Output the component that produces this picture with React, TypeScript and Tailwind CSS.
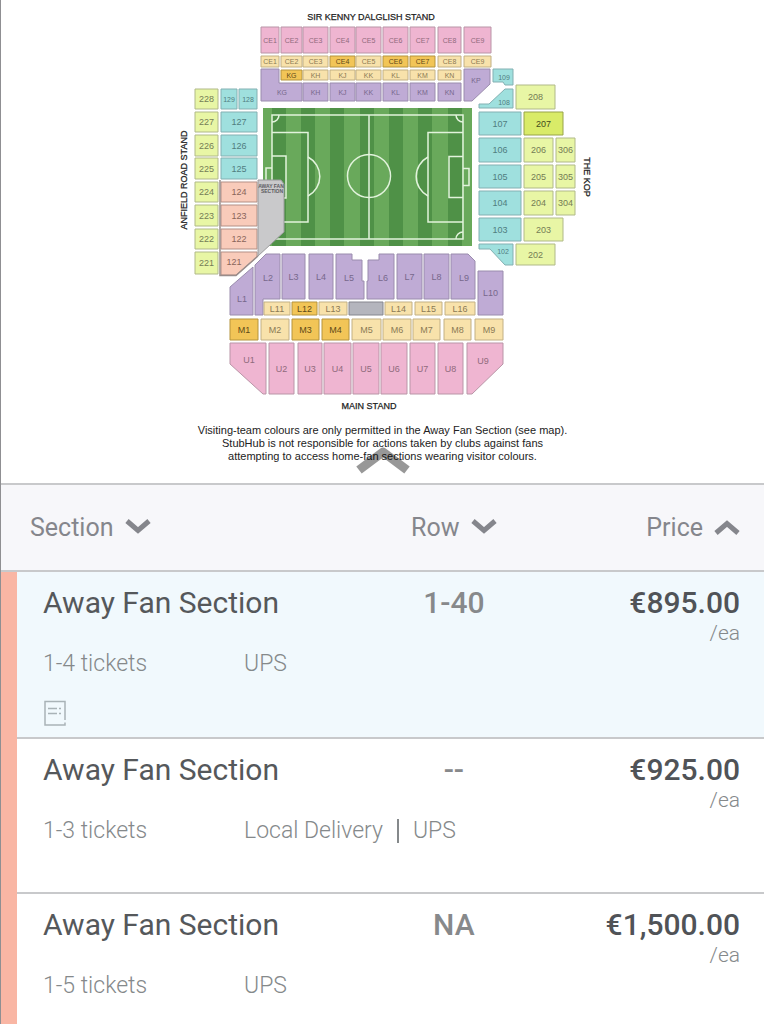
import { useState } from "react";

type Tone = "pink" | "cream" | "gold" | "purple" | "teal" | "lime" | "limeOn" | "peach" | "grey";

interface Block {
  label: string;
  tone: Tone;
  // corner list of the block, "x,y x,y ..."
  points: string;
  x: number;
  y: number;
  size?: number;
}

interface Listing {
  id: number;
  section: string;
  row: string;
  price: string;
  tickets: string;
  delivery: string[];
  hasNote: boolean;
}

const TONES: Record<Tone, { shape: string; text: string }> = {
  pink: { shape: "fill-[#efb5d1] stroke-[#b995a7]", text: "fill-[#8f6a7c]" },
  cream: { shape: "fill-[#f8e2ab] stroke-[#c2b084]", text: "fill-[#8b7a55]" },
  gold: { shape: "fill-[#f2c557] stroke-[#b5943f]", text: "fill-[#5f4a17]" },
  purple: { shape: "fill-[#bfabd5] stroke-[#9a8cad]", text: "fill-[#77688c]" },
  teal: { shape: "fill-[#9fe0de] stroke-[#83b0b2]", text: "fill-[#4f7d80]" },
  lime: { shape: "fill-[#e8f6a5] stroke-[#b0b988]", text: "fill-[#747c55]" },
  limeOn: { shape: "fill-[#d9eb68] stroke-[#97a348]", text: "fill-[#3f4a1c]" },
  peach: { shape: "fill-[#f9cbba] stroke-[#b38f85]", text: "fill-[#8a655b]" },
  grey: { shape: "fill-[#b4b5bd] stroke-[#85868e]", text: "fill-[#555555]" },
};

function box(label: string, tone: Tone, x1: number, y1: number, x2: number, y2: number, size = 9): Block {
  return {
    label,
    tone,
    points: `${x1},${y1} ${x2},${y1} ${x2},${y2} ${x1},${y2}`,
    x: (x1 + x2) / 2,
    y: (y1 + y2) / 2,
    size,
  };
}

const TOP_COLS = [
  [261, 279],
  [281, 302],
  [303, 328],
  [330, 355],
  [356, 381],
  [383, 408],
  [410, 435],
  [438, 461],
  [464, 491],
];
const TOP_K = ["KG", "KH", "KJ", "KK", "KL", "KM", "KN"];

const DALGLISH: Block[] = [
  ...TOP_COLS.map(([a, b], i) => box(`CE${i + 1}`, "pink", a, 27, b, 53, 7)),
  ...TOP_COLS.map(([a, b], i) => box(`CE${i + 1}`, [3, 5, 6].includes(i) ? "gold" : "cream", a, 56, b, 67, 7)),
  ...TOP_K.map((k, i) => box(k, i === 0 ? "gold" : "cream", TOP_COLS[i + 1][0], 70, TOP_COLS[i + 1][1], 80, 7)),
  { label: "KG", tone: "purple", points: "261,69 279,69 279,83 302,83 302,101 261,101", x: 282, y: 92, size: 7 },
  ...TOP_K.slice(1).map((k, i) => box(k, "purple", TOP_COLS[i + 2][0], 83, TOP_COLS[i + 2][1], 101, 7)),
  { label: "KP", tone: "purple", points: "464,69 490,69 490,84 472,101 464,101", x: 476, y: 80, size: 7 },
];

const KOP: Block[] = [
  { label: "109", tone: "teal", points: "493,69 513,69 513,85 505,85 503,82 493,82", x: 504, y: 77, size: 7 },
  { label: "108", tone: "teal", points: "505,89 513,89 513,108 479,108 479,104 489,104", x: 504, y: 102, size: 7 },
  box("208", "lime", 516, 85, 555, 109),
  box("107", "teal", 479, 112, 521, 135),
  box("207", "limeOn", 524, 112, 563, 135),
  box("106", "teal", 479, 138, 521, 162),
  box("206", "lime", 524, 138, 553, 162),
  box("306", "lime", 556, 138, 575, 162),
  box("105", "teal", 479, 165, 521, 188),
  box("205", "lime", 524, 165, 553, 188),
  box("305", "lime", 556, 165, 575, 188),
  box("104", "teal", 479, 191, 521, 215),
  box("204", "lime", 524, 191, 553, 215),
  box("304", "lime", 556, 191, 575, 215),
  box("103", "teal", 479, 218, 521, 241),
  box("203", "lime", 524, 218, 563, 241),
  { label: "102", tone: "teal", points: "479,244 513,244 513,265 505,265 490,249 479,249", x: 503, y: 251, size: 7 },
  box("202", "lime", 516, 244, 555, 265),
];

const ANFIELD_ROAD: Block[] = [
  box("228", "lime", 195, 89, 218, 109),
  box("129", "teal", 221, 89, 237, 109, 7),
  box("128", "teal", 239, 89, 257, 109, 7),
  box("227", "lime", 195, 112, 218, 132),
  box("127", "teal", 221, 112, 257, 132),
  box("226", "lime", 195, 135, 218, 156),
  box("126", "teal", 221, 135, 257, 156),
  box("225", "lime", 195, 158, 218, 179),
  box("125", "teal", 221, 158, 257, 179),
  box("224", "lime", 195, 182, 218, 202),
  box("124", "peach", 221, 182, 257, 202),
  box("223", "lime", 195, 205, 218, 226),
  box("123", "peach", 221, 205, 257, 226),
  box("222", "lime", 195, 229, 218, 249),
  box("122", "peach", 221, 229, 257, 249),
  box("221", "lime", 195, 252, 218, 274),
  { label: "121", tone: "peach", points: "221,252 257,252 257,257 236,275 221,275", x: 234, y: 262 },
];

const MAIN: Block[] = [
  { label: "L1", tone: "purple", points: "230,287 253,267 253,315 230,315", x: 242, y: 299 },
  { label: "L2", tone: "purple", points: "255,265 266,254 280,254 280,299 263,299 263,315 255,315", x: 268, y: 278 },
  box("L3", "purple", 282, 254, 305, 299),
  box("L4", "purple", 309, 254, 333, 299),
  {
    label: "L5",
    tone: "purple",
    points: "336,254 352,254 352,260 362,260 362,281 364,281 364,299 336,299",
    x: 349,
    y: 278,
  },
  {
    label: "L6",
    tone: "purple",
    points: "368,260 379,260 379,254 394,254 394,299 367,299 367,281 368,281",
    x: 383,
    y: 278,
  },
  box("L7", "purple", 397, 254, 422, 299),
  box("L8", "purple", 424, 254, 449, 299),
  { label: "L9", tone: "purple", points: "451,254 468,254 475,261 475,299 451,299", x: 464, y: 278 },
  box("L10", "purple", 478, 271, 503, 315),
  box("L11", "cream", 264, 302, 290, 315),
  box("L12", "gold", 292, 302, 317, 315),
  box("L13", "cream", 319, 302, 347, 315),
  box("", "grey", 349, 302, 383, 315),
  box("L14", "cream", 385, 302, 412, 315),
  box("L15", "cream", 415, 302, 442, 315),
  box("L16", "cream", 445, 302, 475, 315),
  box("M1", "gold", 230, 319, 258, 340),
  box("M2", "cream", 261, 319, 289, 340),
  box("M3", "gold", 292, 319, 319, 340),
  box("M4", "gold", 322, 319, 349, 340),
  box("M5", "cream", 352, 319, 381, 340),
  box("M6", "cream", 383, 319, 411, 340),
  box("M7", "cream", 413, 319, 440, 340),
  box("M8", "cream", 444, 319, 471, 340),
  box("M9", "cream", 475, 319, 503, 340),
  { label: "U1", tone: "pink", points: "230,343 266,343 266,394 263,394 230,364", x: 249, y: 360 },
  box("U2", "pink", 269, 343, 294, 394),
  box("U3", "pink", 298, 343, 322, 394),
  box("U4", "pink", 324, 343, 351, 394),
  box("U5", "pink", 353, 343, 379, 394),
  box("U6", "pink", 381, 343, 407, 394),
  box("U7", "pink", 410, 343, 435, 394),
  box("U8", "pink", 438, 343, 463, 394),
  { label: "U9", tone: "pink", points: "467,343 503,343 503,364 472,394 467,394", x: 483, y: 361 },
];

const BLOCKS = [...DALGLISH, ...KOP, ...ANFIELD_ROAD, ...MAIN];

const GRASS_BANDS = [272, 301, 330, 360, 389, 418, 448];

const LISTINGS: Listing[] = [
  {
    id: 1,
    section: "Away Fan Section",
    row: "1-40",
    price: "€895.00",
    tickets: "1-4 tickets",
    delivery: ["UPS"],
    hasNote: true,
  },
  {
    id: 2,
    section: "Away Fan Section",
    row: "--",
    price: "€925.00",
    tickets: "1-3 tickets",
    delivery: ["Local Delivery", "UPS"],
    hasNote: false,
  },
  {
    id: 3,
    section: "Away Fan Section",
    row: "NA",
    price: "€1,500.00",
    tickets: "1-5 tickets",
    delivery: ["UPS"],
    hasNote: false,
  },
];

function Pitch() {
  return (
    <g>
      <rect x="263" y="108" width="209" height="138" className="fill-[#69a95b]" />
      {GRASS_BANDS.map((x) => (
        <rect key={x} x={x} y="108" width="14" height="138" className="fill-[#4f9147]" />
      ))}
      <g className="fill-none stroke-[#e2f3dc]" strokeWidth="1.5">
        <rect x="272" y="115" width="191" height="124" />
        <path d="M369 115V239" />
        <circle cx="369" cy="176" r="21.5" />
        <path d="M272 132.500H308V222H272M272 156H286V198H272M272 168H266V185H272" />
        <path d="M463 132.500H428V222H463M463 156.500H449V197.500H463M463 168.500H469V185.500H463" />
        <path d="M308 157A22 22 0 0 1 308 196M428 157A22 22 0 0 0 428 196" />
        <path d="M279 115A7 7 0 0 1 272 122M456 115A7 7 0 0 0 463 122M456 239A7 7 0 0 1 463 232" />
      </g>
    </g>
  );
}

function StadiumMap() {
  return (
    <svg
      viewBox="172 0 421 416"
      className="block w-[421px] max-w-full font-['Liberation_Sans',Arial,sans-serif]"
      role="img"
      aria-label="Stadium seating map"
      textAnchor="middle"
    >
      <Pitch />
      {BLOCKS.map((b, i) => (
        <g key={i}>
          <polygon points={b.points} className={TONES[b.tone].shape} strokeWidth="1" />
          <text x={b.x} y={b.y + (b.size === 7 ? 2.5 : 3)} fontSize={b.size ?? 9} className={TONES[b.tone].text}>
            {b.label}
          </text>
        </g>
      ))}
      <polygon
        points="258,180 281,180 284,184 284,232 258,256"
        className="fill-[#c9c9cb] stroke-[#9a9a9c]"
        strokeWidth="1"
      />
      <path d="M220 180V275.500H236L258 256" className="fill-none stroke-[#998d8b]" strokeWidth="1.5" />
      <g fontSize="5" fontWeight="bold" className="fill-[#5c5c62]">
        <text x="271" y="188">AWAY FAN</text>
        <text x="272" y="193">SECTION</text>
      </g>
      <g fontSize="9" className="fill-[#222222] stroke-[#222222]" strokeWidth="0.25">
        <text x="371" y="20">SIR KENNY DALGLISH STAND</text>
        <text x="369" y="409">MAIN STAND</text>
        <text transform="translate(187 180) rotate(-90)">ANFIELD ROAD STAND</text>
        <text transform="translate(584 177) rotate(90)">THE KOP</text>
      </g>
    </svg>
  );
}

function SortArrow({ up }: { up?: boolean }) {
  return (
    <svg viewBox="0 0 26 18" className="h-[18px] w-[26px] fill-none stroke-current" strokeWidth="5" aria-hidden="true">
      <path d={up ? "M2 14L13 4.500L24 14" : "M2 2L13 11.500L24 2"} />
    </svg>
  );
}

function NoteIcon() {
  return (
    <svg viewBox="0 0 24 26" className="h-[26px] w-6 fill-none stroke-[#a9b3b7]" strokeWidth="1.5" aria-hidden="true">
      <path d="M22 20V1.500H2V25H22V22.500" />
      <path d="M5 8.500H14M16 8.500H18M5 13.500H14M16 13.500H18" />
    </svg>
  );
}

function ListingRows({ listing, first }: { listing: Listing; first: boolean }) {
  const line = first ? "" : "border-t-2 border-[#c8c9cb]";
  return (
    <tbody className={listing.hasNote ? "bg-[#f1f9fd]" : "bg-white"}>
      <tr className="align-top">
        <td rowSpan={3} className="bg-[#f9b6a4]" />
        <th scope="row" colSpan={2} className={`pt-[13px] pl-[26px] text-left text-[30px] leading-9 font-normal text-[#55585b] ${line}`}>
          {listing.section}
        </th>
        <td className={`pt-[13px] text-center text-[30px] leading-9 font-medium text-[#87898b] ${line}`}>{listing.row}</td>
        <td className={`pt-[13px] pr-6 text-right ${line}`}>
          <div className="text-[30px] leading-9 font-medium text-[#505357]">{listing.price}</div>
          <div className="text-[21px] leading-6 font-light text-[#85898b]">/ea</div>
        </td>
      </tr>
      <tr className="text-[23px] leading-7 font-light text-[#85898b]">
        <td className="pt-[5px] pl-[26px]">{listing.tickets}</td>
        <td colSpan={3} className="pt-[5px]">
          <div className="flex items-center">
            {listing.delivery.map((d, i) => (
              <span key={d} className={i > 0 ? "ml-[14px] flex items-center gap-[14px] before:h-6 before:w-0.5 before:bg-[#85898b]" : ""}>
                {d}
              </span>
            ))}
          </div>
        </td>
      </tr>
      <tr>
        <td colSpan={4} className={listing.hasNote ? "pt-[22px] pb-[11px] pl-[26px]" : "h-[47px]"}>
          {listing.hasNote && <NoteIcon />}
        </td>
      </tr>
    </tbody>
  );
}

export default function App() {
  const [mapOpen, setMapOpen] = useState(true);

  return (
    <main className="min-h-screen border-l border-[#8f8f92] bg-white font-[Roboto,sans-serif]">
      <section className="relative flex flex-col items-center pb-5">
        {mapOpen && (
          <>
            <StadiumMap />
            <p className="mt-2 text-center font-['Liberation_Sans',Arial,sans-serif] text-[11px] leading-[13px] text-[#222222]">
              Visiting-team colours are only permitted in the Away Fan Section (see map).
              <br />
              StubHub is not responsible for actions taken by clubs against fans
              <br />
              attempting to access home-fan sections wearing visitor colours.
            </p>
          </>
        )}
        <button
          type="button"
          onClick={() => setMapOpen(!mapOpen)}
          aria-label="Toggle map"
          className="absolute bottom-2 left-1/2 -translate-x-1/2"
        >
          <svg viewBox="0 0 56 30" className="h-[30px] w-14 fill-none stroke-black opacity-40" strokeWidth="9" strokeLinejoin="round">
            <path d="M4 25L28 7L52 25" />
          </svg>
        </button>
      </section>

      <table className="w-full table-fixed border-separate border-spacing-0">
        <colgroup>
          <col className="w-4" />
          <col className="w-[227px]" />
          <col className="w-[13%]" />
          <col className="w-[29%]" />
          <col />
        </colgroup>
        <thead className="bg-[#f7f7fa] text-[25px] text-[#85868c]">
          <tr className="h-[89px]">
            <th colSpan={3} className="border-y-2 border-[#c8c9cb] pl-[29px] text-left font-normal">
              <button type="button" className="flex items-center gap-[11px]">
                Section <SortArrow />
              </button>
            </th>
            <th className="border-y-2 border-[#c8c9cb] font-normal">
              <button type="button" className="mx-auto flex items-center gap-[11px]">
                Row <SortArrow />
              </button>
            </th>
            <th aria-sort="ascending" className="border-y-2 border-[#c8c9cb] pr-6 font-normal">
              <button type="button" className="ml-auto flex items-center gap-[11px]">
                Price <SortArrow up />
              </button>
            </th>
          </tr>
        </thead>
        {LISTINGS.map((l, i) => (
          <ListingRows key={l.id} listing={l} first={i === 0} />
        ))}
      </table>
    </main>
  );
}
